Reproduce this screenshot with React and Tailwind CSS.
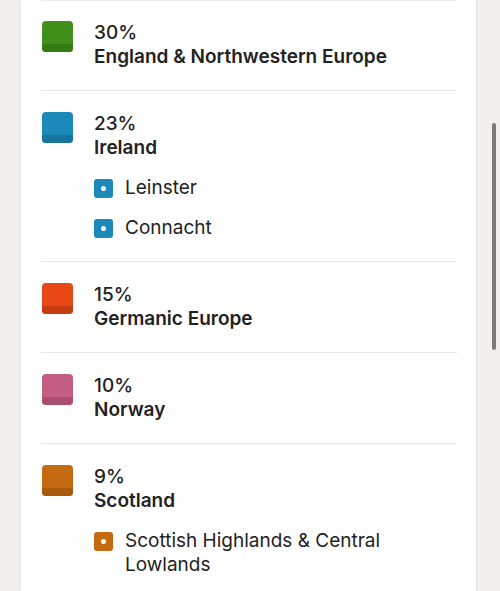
import React from "react";

const regions = [
  { pct: "30%", name: "England & Northwestern Europe", top: "bg-[#40901a]", bot: "bg-[#367b14]", sub: [] },
  { pct: "23%", name: "Ireland", top: "bg-[#1b8ab8]", bot: "bg-[#17759c]", sub: ["Leinster", "Connacht"], subc: "bg-[#1b8ab8]" },
  { pct: "15%", name: "Germanic Europe", top: "bg-[#e84816]", bot: "bg-[#c73d12]", sub: [] },
  { pct: "10%", name: "Norway", top: "bg-[#c45d84]", bot: "bg-[#a94f71]", sub: [] },
  { pct: "9%", name: "Scotland", top: "bg-[#c56a10]", bot: "bg-[#a85a0d]", sub: ["Scottish Highlands & Central Lowlands"], subc: "bg-[#c56a10]" },
];

function Swatch({ top, bot }) {
  return (
    <div className={`w-[31px] h-[31px] rounded-[4px] overflow-hidden flex flex-col shrink-0 ${top}`}>
      <div className="flex-1" />
      <div className={`h-[8px] ${bot}`} />
    </div>
  );
}

export default function App() {
  return (
    <div
      className="relative w-[500px] h-[591px] overflow-hidden bg-[#f2efec] flex"
      style={{ fontFamily: "Inter, 'Liberation Sans', sans-serif" }}
    >
      <div className="ml-[21px] w-[456px] h-full bg-white border-r border-[#e6e3e0] shadow-[-2px_0_4px_rgba(0,0,0,0.04)] pl-[20px] pr-[19px]">
        <div className="h-px bg-[#ececec]" />
        {regions.map((r, i) => (
          <div key={i} className={`border-b border-[#e6e6e6] pb-[21px] ${i === 0 ? "pt-[20px]" : "pt-[21px]"}`}>
            <div className="flex items-start gap-[21px] pl-px">
              <Swatch top={r.top} bot={r.bot} />
              <div className="flex flex-col text-[#222222]">
                <div className="text-[19px] leading-[24px] font-medium">{r.pct}</div>
                <div className="text-[19px] leading-[24px] font-semibold">{r.name}</div>
                {r.sub.length > 0 && (
                  <div className="flex flex-col gap-[16px] mt-[16px]">
                    {r.sub.map((s) => (
                      <div key={s} className="flex items-start gap-[12px]">
                        <div className={`mt-[3px] w-[19px] h-[19px] rounded-[3px] shrink-0 flex items-center justify-center ${r.subc}`}>
                          <div className="w-[5px] h-[5px] rounded-full bg-white" />
                        </div>
                        <div className="text-[19px] leading-[24px] font-normal w-[290px]">{s}</div>
                      </div>
                    ))}
                  </div>
                )}
              </div>
            </div>
          </div>
        ))}
      </div>
      <div className="absolute left-[492px] top-[123px] w-[4px] h-[227px] rounded-full bg-[#7b7b7b]" />
    </div>
  );
}
